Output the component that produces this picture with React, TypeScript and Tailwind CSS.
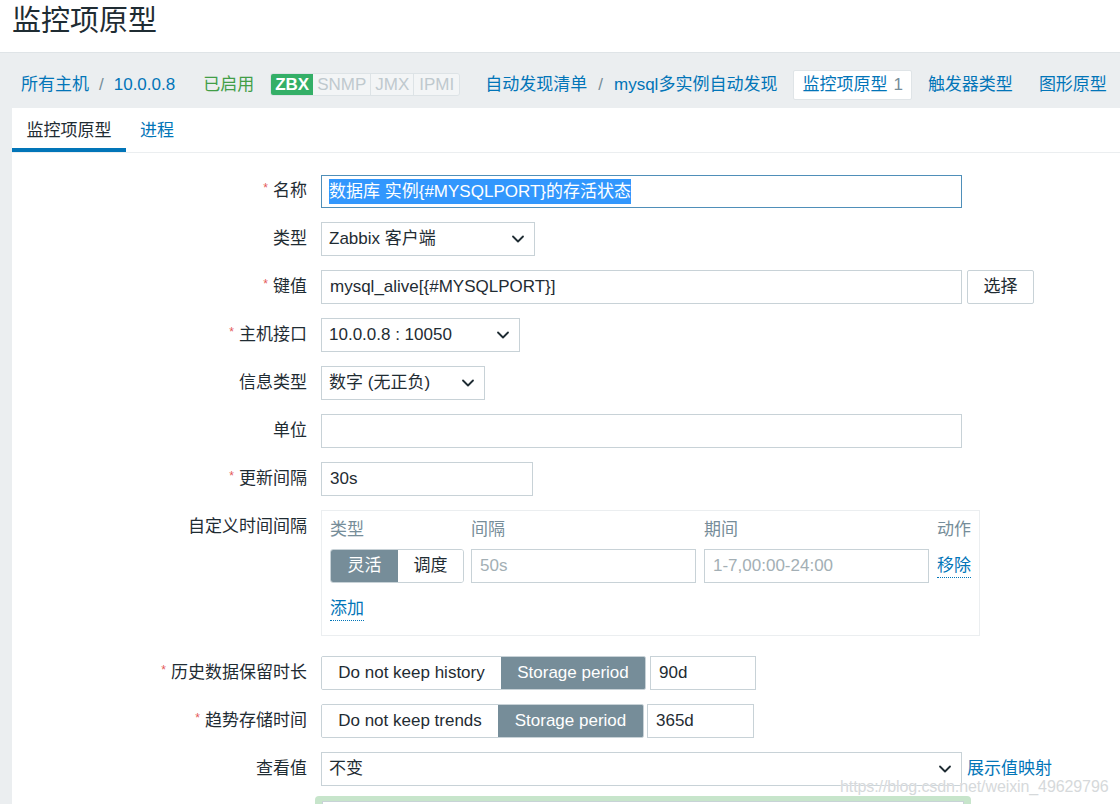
import { ChevronDown } from "lucide-react";

const font = { fontFamily: '"Liberation Sans", Arial, "Noto Sans CJK SC", sans-serif' };

function Label({ text, required }: { text: string; required?: boolean }) {
  return (
    <div className="flex h-[34px] items-center justify-end text-[17px] text-[#1f2c33]">
      {required && <span className="mr-[5px] text-[12px] text-[#e45959] -mt-[6px]">*</span>}
      {text}
    </div>
  );
}

function Select({ value, width }: { value: string; width: string }) {
  return (
    <div
      className={`flex h-[34px] items-center justify-between border border-[#c8d2d7] bg-white pl-[7px] pr-[6px] text-[17px] text-[#1f2c33] ${width}`}
    >
      <span>{value}</span>
      <ChevronDown size={20} strokeWidth={2.2} className="text-[#1f2c33]" />
    </div>
  );
}

function Input({ value, width, placeholder }: { value?: string; width: string; placeholder?: string }) {
  return (
    <div
      className={`flex h-[34px] items-center border border-[#c8d2d7] bg-white px-[8px] text-[17px] ${width} ${
        placeholder ? "text-[#a3afb5]" : "text-[#1f2c33]"
      }`}
    >
      {value ?? placeholder}
    </div>
  );
}

function Segment({ left, right, leftW, rightW }: { left: string; right: string; leftW: string; rightW: string }) {
  return (
    <div className="flex h-[34px] overflow-hidden rounded-[2px] border border-[#c8d2d7] text-[17px]">
      <div className={`flex items-center justify-center bg-white text-[#1f2c33] ${leftW}`}>{left}</div>
      <div className={`flex items-center justify-center bg-[#768d99] text-white ${rightW}`}>{right}</div>
    </div>
  );
}

export default function App() {
  return (
    <div className="relative h-[804px] w-[1120px] overflow-hidden bg-white" style={font}>
      {/* Title */}
      <div className="h-[52px] pl-[12px] pt-[1px] text-[29px] leading-[40px] text-[#1f2c33]">监控项原型</div>

      {/* Breadcrumb bar */}
      <div className="border-t border-[#dfe4e7] bg-[#ebeef0] pl-[12px]">
        <div className="flex h-[55px] items-center whitespace-nowrap pl-[9px] pt-[8px] text-[17px]">
          <span className="text-[#0275b8]">所有主机</span>
          <span className="mx-[10px] text-[#768d99]">/</span>
          <span className="text-[#0275b8]">10.0.0.8</span>
          <span className="ml-[28px] text-[#429e47]">已启用</span>
          <div className="ml-[16px] flex h-[23px] overflow-hidden rounded-[3px] border border-[#dde3e6] text-[17px] leading-[21px]">
            <span className="bg-[#34af67] px-[4px] font-bold text-white">ZBX</span>
            <span className="border-r border-[#dde3e6] bg-[#f3f5f6] px-[4px] text-[#bfc9ce]">SNMP</span>
            <span className="border-r border-[#dde3e6] bg-[#f3f5f6] px-[4px] text-[#bfc9ce]">JMX</span>
            <span className="bg-[#f3f5f6] px-[5px] text-[#bfc9ce]">IPMI</span>
          </div>
          <span className="ml-[25px] text-[#0275b8]">自动发现清单</span>
          <span className="mx-[11px] text-[#768d99]">/</span>
          <span className="text-[#0275b8]">mysql多实例自动发现</span>
          <div className="ml-[16px] flex h-[30px] items-center rounded-[2px] border border-[#dfe4e7] bg-white px-[8px]">
            <span className="text-[#0275b8]">监控项原型</span>
            <span className="ml-[6px] text-[#768d99]">1</span>
          </div>
          <span className="ml-[16px] text-[#0275b8]">触发器类型</span>
          <span className="ml-[26px] text-[#0275b8]">图形原型</span>
        </div>

        {/* White panel */}
        <div className="bg-white pb-[40px]">
          {/* Tabs */}
          <div className="flex h-[45px] items-stretch border-b border-[#ebeef0] text-[17px]">
            <div className="flex w-[114px] items-center justify-center border-b-[4px] border-[#0275b8] pt-[6px] text-[#1f2c33]">
              监控项原型
            </div>
            <div className="ml-[14px] flex items-center pt-[2px] text-[#0275b8]">进程</div>
          </div>

          {/* Form */}
          <div className="grid grid-cols-[295px_1fr] gap-x-[14px] gap-y-[14px] pt-[21px]">
            <Label text="名称" required />
            <div className="mt-[1px] flex h-[33px] w-[641px] items-center border border-[#4f8fb9] bg-white px-[7px] text-[17px]">
              <span className="bg-[#3297fd] text-white">数据库 实例{"{#MYSQLPORT}"}的存活状态</span>
            </div>

            <Label text="类型" />
            <Select value="Zabbix 客户端" width="w-[214px]" />

            <Label text="键值" required />
            <div className="flex items-center gap-[5px]">
              <Input value="mysql_alive[{#MYSQLPORT}]" width="w-[641px]" />
              <div className="flex h-[34px] w-[67px] items-center justify-center rounded-[2px] border border-[#c8d2d7] bg-white text-[17px] text-[#1f2c33]">
                选择
              </div>
            </div>

            <Label text="主机接口" required />
            <Select value="10.0.0.8 : 10050" width="w-[199px]" />

            <Label text="信息类型" />
            <Select value="数字 (无正负)" width="w-[164px]" />

            <Label text="单位" />
            <Input value="" width="w-[641px]" />

            <Label text="更新间隔" required />
            <Input value="30s" width="w-[212px]" />

            <Label text="自定义时间间隔" />
            <div className="mb-[6px] w-[659px] border border-[#ebeef0] px-[8px] pb-[14px] pt-[5px]">
              <div className="flex h-[28px] items-center text-[17px] text-[#768d99]">
                <span className="w-[141px]">类型</span>
                <span className="w-[233px]">间隔</span>
                <span className="w-[233px]">期间</span>
                <span className="flex-1 text-right">动作</span>
              </div>
              <div className="mt-[5px] flex items-center">
                <div className="flex h-[34px] w-[134px] overflow-hidden rounded-[3px] border border-[#c8d2d7] text-[17px]">
                  <div className="flex w-[67px] items-center justify-center bg-[#768d99] text-white">灵活</div>
                  <div className="flex flex-1 items-center justify-center bg-white text-[#1f2c33]">调度</div>
                </div>
                <div className="ml-[7px]">
                  <Input placeholder="50s" width="w-[225px]" />
                </div>
                <div className="ml-[8px]">
                  <Input placeholder="1-7,00:00-24:00" width="w-[225px]" />
                </div>
                <span className="ml-[8px] border-b border-dotted border-[#0275b8] text-[17px] leading-[22px] text-[#0275b8]">
                  移除
                </span>
              </div>
              <div className="mt-[15px] flex">
                <span className="border-b border-dotted border-[#0275b8] text-[17px] leading-[22px] text-[#0275b8]">
                  添加
                </span>
              </div>
            </div>

            <Label text="历史数据保留时长" required />
            <div className="flex items-center gap-[4px]">
              <Segment left="Do not keep history" right="Storage period" leftW="w-[179px]" rightW="w-[144px]" />
              <Input value="90d" width="w-[106px]" />
            </div>

            <Label text="趋势存储时间" required />
            <div className="flex items-center gap-[3px]">
              <Segment left="Do not keep trends" right="Storage period" leftW="w-[176px]" rightW="w-[145px]" />
              <Input value="365d" width="w-[107px]" />
            </div>

            <Label text="查看值" />
            <div className="flex items-center gap-[5px]">
              <Select value="不变" width="w-[641px]" />
              <span className="text-[17px] text-[#0275b8]">展示值映射</span>
            </div>

            <div />
            <div className="-ml-[6px] -mt-[4px] w-[656px] rounded-[4px] bg-[#c7e5cb] px-[7px] pt-[5px]">
              <div className="h-[40px] border border-[#c8d2d7] bg-white" />
            </div>
          </div>
        </div>
      </div>

      {/* Watermark */}
      <div className="pointer-events-none absolute left-[840px] top-[775px] text-[16px] tracking-[-0.1px] text-[#d6d9db] [text-shadow:0_0_1px_#ffffff]">
        https://blog.csdn.net/weixin_49629796
      </div>
    </div>
  );
}
